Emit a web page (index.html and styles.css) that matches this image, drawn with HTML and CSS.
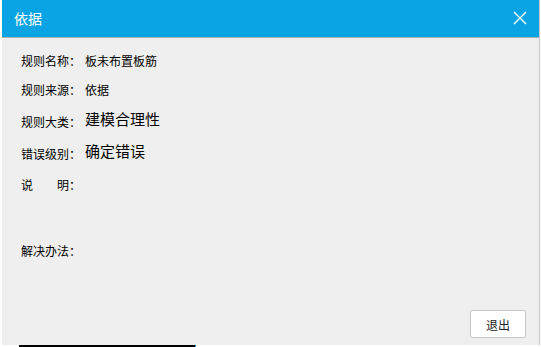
FILE: index.html
```html
<!DOCTYPE html>
<html lang="zh">
<head>
  <meta charset="UTF-8">
  <title>依据</title>
  <link rel="stylesheet" href="styles.css">
</head>
<body>
  <div class="dialog">
    <div class="title-bar">
      <span class="title">依据</span>
      <svg class="close" width="14" height="14" viewBox="0 0 14 14">
        <path d="M1 1L13 13M13 1L1 13" stroke="#fff" stroke-width="1.4" fill="none"/>
      </svg>
    </div>
    <div class="content">
      <div class="row r1"><span class="label">规则名称：</span><span class="value">板未布置板筋</span></div>
      <div class="row r2"><span class="label">规则来源：</span><span class="value">依据</span></div>
      <div class="row r3"><span class="label">规则大类：</span><span class="value big">建模合理性</span></div>
      <div class="row r4"><span class="label">错误级别：</span><span class="value big">确定错误</span></div>
      <div class="row r5"><span class="label">说&emsp;&emsp;明：</span></div>
      <div class="row r6"><span class="label">解决办法：</span></div>
      <div class="actions">
        <button class="btn">退出</button>
      </div>
    </div>
  </div>
  <div class="bottom-line"></div>
</body>
</html>
```

FILE: styles.css
```css
body {
  margin: 0;
  background: #fff;
  font-family: "Noto Sans CJK SC", "DejaVu Sans", sans-serif;
  width: 541px;
  height: 347px;
  overflow: hidden;
}

.dialog {
  margin-left: 2px;
  width: 537px;
  height: 345px;
  background: #efefef;
  border-right: 1px solid #c8c8c8;
  display: flex;
  flex-direction: column;
}

.title-bar {
  height: 37px;
  background: #0aa3e3;
  border-bottom: 1px solid #b0b0b0;
  display: flex;
  align-items: center;
  justify-content: space-between;
  padding: 0 12px 0 12px;
  color: #fff;
}

.title {
  font-size: 14px;
  margin-top: -1px;
}

.close {
  margin-top: -1px;
}

.content {
  flex: 1;
  position: relative;
  padding-left: 19px;
  color: #000;
  font-size: 12px;
}

.row {
  display: flex;
  align-items: flex-end;
  line-height: 16px;
}

.label {
  width: 64px;
}

.value.big {
  font-size: 15px;
  line-height: 18px;
  position: relative;
  top: -2px;
}

.r1 { margin-top: 15px; }
.r2 { margin-top: 13px; }
.r3 { margin-top: 14px; }
.r4 { margin-top: 14px; }
.r5 { margin-top: 15px; }
.r6 { margin-top: 50px; }

.actions {
  position: absolute;
  right: 13px;
  bottom: 7px;
}

.btn {
  width: 56px;
  height: 28px;
  background: #fff;
  border: 1px solid #c6c6c6;
  border-radius: 2px;
  font-family: inherit;
  font-size: 12px;
  color: #222;
}

.bottom-line {
  margin-left: 19px;
  width: 176px;
  height: 2px;
  background: #000;
  border-right: 1px solid #1e90ff;
}
```
